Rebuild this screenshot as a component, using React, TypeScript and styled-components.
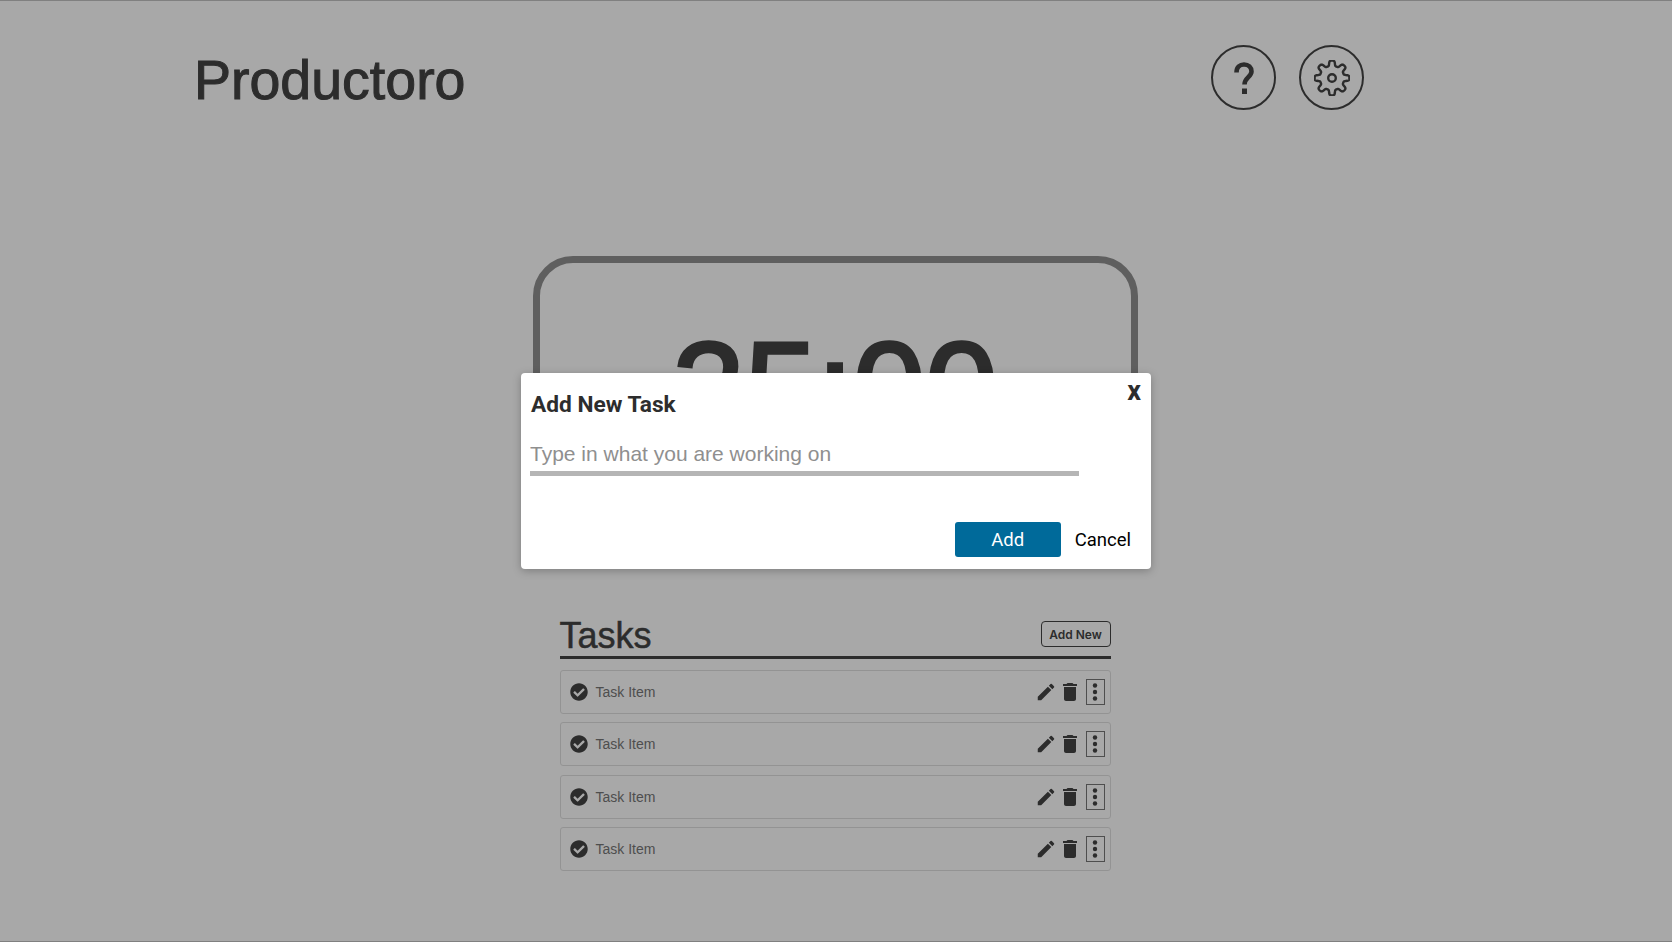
import React from 'react'
import styled, { createGlobalStyle } from 'styled-components'
import { FaCheckCircle } from 'react-icons/fa'
import { MdDelete, MdEdit } from 'react-icons/md'

const GlobalStyle = createGlobalStyle`
	html, body {
		margin: 0;
		padding: 0;
		background: #efefef;
		font-family: "Liberation Sans", Arial, sans-serif;
	}
`

const Page = styled.div`
	height: 944px;
	overflow: hidden;
	position: relative;
	background: #fff;
	color: #444;
`

const Container = styled.div`
	width: 1280px;
	margin: 0 auto;
	padding: 45px 0 0 0;
	display: flex;
	flex-direction: column;
`

const Header = styled.header`
	display: flex;
	justify-content: space-between;
	align-items: center;
	padding: 0 112px 0 0;
`

const Logo = styled.h1`
	margin: 6px 0 0 -2px;
	font-size: 55.5px;
	font-weight: 400;
	line-height: 59px;
	-webkit-text-stroke: 1px #444;
`

const HeaderActions = styled.div`
	display: flex;
	gap: 23px;
`

const CircleButton = styled.button`
	width: 65px;
	height: 65px;
	border: 2.5px solid #444;
	border-radius: 50%;
	background: transparent;
	color: #444;
	padding: 0;
	display: flex;
	align-items: center;
	justify-content: center;
`

const Main = styled.main`
	display: flex;
	flex-direction: column;
	align-items: center;
	margin-top: 146px;
	padding-right: 2px;
`

const TimerBox = styled.section`
	box-sizing: border-box;
	width: 605px;
	height: 260px;
	border: 7px solid #919191;
	border-radius: 40px;
	display: flex;
	justify-content: center;
	padding-top: 50px;
`

const TimerText = styled.div`
	font-size: 130px;
	line-height: 150px;
	font-weight: 400;
	color: #444;
	-webkit-text-stroke: 3.5px #444;
`

const TaskPanel = styled.section`
	width: 551px;
	margin-top: 105px;
`

const TaskHeader = styled.div`
	display: flex;
	justify-content: space-between;
	align-items: flex-end;
	border-bottom: 3px solid #444;
	padding-bottom: 5px;
	margin-bottom: 11px;
`

const TaskTitle = styled.h2`
	margin: 0;
	font-size: 36px;
	line-height: 30px;
	font-weight: 400;
	-webkit-text-stroke: 0.5px #444;
`

const AddNewButton = styled.button`
	box-sizing: border-box;
	width: 70px;
	height: 26px;
	margin-bottom: 4px;
	border: 1px solid #444;
	border-radius: 4px;
	background: transparent;
	color: #444;
	font-family: Inter, sans-serif;
	font-size: 12px;
	font-weight: 600;
	padding: 0;
`

const TaskList = styled.ul`
	list-style: none;
	margin: 0;
	padding: 0;
	display: flex;
	flex-direction: column;
	gap: 8.4px;
`

const TaskRow = styled.li`
	box-sizing: border-box;
	height: 44px;
	border: 1px solid #e0e0e0;
	border-radius: 3px;
	padding: 0 5px 0 9px;
	display: flex;
	align-items: center;
	color: #444;
`

const TaskName = styled.span`
	flex: 1;
	margin-left: 8px;
	font-size: 14px;
	color: #777;
`

const RowActions = styled.div`
	display: flex;
	align-items: center;
	gap: 1px;
`

const IconButton = styled.span`
	display: flex;
	color: #444;
`

const MoreBox = styled.span`
	box-sizing: border-box;
	width: 19px;
	height: 26px;
	border: 1px solid #777;
	margin-left: 3px;
	display: flex;
	align-items: center;
	justify-content: center;
`

const Overlay = styled.div`
	position: absolute;
	inset: 0 0 2px 0;
	background: rgba(0, 0, 0, 0.34);
	border-top: 1px solid #808080;
	border-bottom: 1px solid #808080;
`

const Modal = styled.div`
	position: absolute;
	left: 521px;
	top: 372px;
	width: 630px;
	height: 196px;
	box-sizing: border-box;
	background: #fff;
	border-radius: 4px;
	box-shadow: 0 2px 8px rgba(0, 0, 0, 0.25);
	padding: 19px 20px 12px 10px;
	display: flex;
	flex-direction: column;
	font-family: Roboto, sans-serif;
`

const ModalTitle = styled.h3`
	margin: 0;
	font-size: 22.7px;
	line-height: 26px;
	font-weight: 700;
	color: #2d2d2d;
`

const CloseMark = styled.span`
	position: absolute;
	right: 10px;
	top: 3px;
	font-size: 27px;
	line-height: 30px;
	font-weight: 700;
	color: #2d2d2d;
`

const TaskInput = styled.input`
	box-sizing: border-box;
	width: 549px;
	height: 39px;
	margin: 19px 0 0 -1px;
	padding: 0;
	border: 0;
	border-bottom: 5px solid #b5b5b5;
	outline: none;
	font-family: "Liberation Sans", sans-serif;
	font-size: 21px;

	&::placeholder {
		color: #8f8f8f;
	}
`

const ModalFooter = styled.div`
	display: flex;
	justify-content: flex-end;
	align-items: center;
	margin-top: auto;
	gap: 14px;
`

const AddButton = styled.button`
	width: 106px;
	height: 35px;
	border: 0;
	border-radius: 3px;
	background: #006a9a;
	color: #fff;
	font-family: Roboto, sans-serif;
	font-size: 18.5px;
	font-weight: 400;
`

const CancelButton = styled.button`
	border: 0;
	background: transparent;
	padding: 0;
	color: #000;
	font-family: Roboto, sans-serif;
	font-size: 18.5px;
	font-weight: 400;
`

// eight rounded teeth, one pointing straight up
const gearPath = (() => {
	const points: string[] = []
	for (let i = 0; i < 240; i++) {
		const angle = (i / 240) * Math.PI * 2
		const wave = Math.tanh(2.2 * Math.cos(8 * angle)) / Math.tanh(2.2)
		const radius = 14.8 + 2.6 * wave
		const x = 18 + radius * Math.sin(angle)
		const y = 18 - radius * Math.cos(angle)
		points.push(`${x.toFixed(2)} ${y.toFixed(2)}`)
	}
	return `M${points.join('L')}Z`
})()

const QuestionIcon = () => (
	<svg width="20" height="32" viewBox="0 0 20 32" fill="none">
		<path
			d="M2.5 10.5C2.5 5 6 2.5 10 2.5C14.5 2.5 17.5 5.5 17.5 9.5C17.5 15 10.5 15.5 10.5 22.5"
			stroke="currentColor"
			strokeWidth="4.6"
		/>
		<rect x="8" y="26.5" width="5" height="5.5" fill="currentColor" />
	</svg>
)

const GearIcon = () => (
	<svg width="36" height="36" viewBox="0 0 36 36" fill="none" stroke="currentColor" strokeWidth="2.4">
		<path d={gearPath} strokeLinejoin="round" />
		<circle cx="18" cy="18" r="3.8" />
	</svg>
)

const DotsIcon = () => (
	<svg width="6" height="18" viewBox="0 0 6 18" fill="currentColor">
		<circle cx="3" cy="2.5" r="2.2" />
		<circle cx="3" cy="9" r="2.2" />
		<circle cx="3" cy="15.5" r="2.2" />
	</svg>
)

const tasks = [1, 2, 3, 4]

export default function App() {
	return (
		<Page>
			<GlobalStyle />
			<Container>
				<Header>
					<Logo>Productoro</Logo>
					<HeaderActions>
						<CircleButton><QuestionIcon /></CircleButton>
						<CircleButton><GearIcon /></CircleButton>
					</HeaderActions>
				</Header>
				<Main>
					<TimerBox>
						<TimerText>25:00</TimerText>
					</TimerBox>
					<TaskPanel>
						<TaskHeader>
							<TaskTitle>Tasks</TaskTitle>
							<AddNewButton>Add New</AddNewButton>
						</TaskHeader>
						<TaskList>
							{tasks.map((id) => (
								<TaskRow key={id}>
									<FaCheckCircle size={18} />
									<TaskName>Task Item</TaskName>
									<RowActions>
										<IconButton><MdEdit size={22} /></IconButton>
										<IconButton><MdDelete size={24} /></IconButton>
										<MoreBox><DotsIcon /></MoreBox>
									</RowActions>
								</TaskRow>
							))}
						</TaskList>
					</TaskPanel>
				</Main>
			</Container>
			<Overlay>
				<Modal>
					<ModalTitle>Add New Task</ModalTitle>
					<CloseMark>x</CloseMark>
					<TaskInput placeholder="Type in what you are working on" />
					<ModalFooter>
						<AddButton>Add</AddButton>
						<CancelButton>Cancel</CancelButton>
					</ModalFooter>
				</Modal>
			</Overlay>
		</Page>
	)
}
